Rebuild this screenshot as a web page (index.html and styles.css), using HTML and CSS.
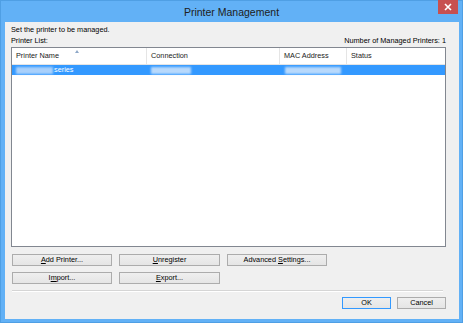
FILE: index.html
```html
<!DOCTYPE html>
<html>
<head>
<meta charset="utf-8">
<link rel="stylesheet" href="styles.css">
</head>
<body>
<div class="window">
  <div class="titlebar">
    <span class="title">Printer Management</span>
    <span class="close"><svg width="8" height="8" viewBox="0 0 8 8"><path d="M1 1L7 7M7 1L1 7" stroke="#fff" stroke-width="1.6"/></svg></span>
  </div>
  <div class="client">
    <div class="intro">Set the printer to be managed.</div>
    <div class="listhead"><span>Printer List:</span><span>Number of Managed Printers: 1</span></div>
    <div class="listview">
      <div class="lv-header">
        <div class="col c1">Printer Name<span class="sort"></span></div>
        <div class="col c2">Connection</div>
        <div class="col c3">MAC Address</div>
        <div class="col c4">Status</div>
      </div>
      <div class="lv-row selected">
        <div class="cell c1"><span class="blob b1"></span><span>series</span></div>
        <div class="cell c2"><span class="blob b2"></span></div>
        <div class="cell c3"><span class="blob b3"></span></div>
        <div class="cell c4"></div>
      </div>
    </div>
    <div class="actions">
      <button class="btn"><u>A</u>dd Printer...</button>
      <button class="btn"><u>U</u>nregister</button>
      <button class="btn">Advanced <u>S</u>ettings...</button>
      <button class="btn">I<u>m</u>port...</button>
      <button class="btn"><u>E</u>xport...</button>
    </div>
    <div class="sep"></div>
    <div class="footer">
      <button class="btn default">OK</button>
      <button class="btn">Cancel</button>
    </div>
  </div>
</div>
</body>
</html>
```
FILE: styles.css
```css
html, body {
  margin: 0;
  padding: 0;
  background: #62b1f6;
}
.window {
  width: 463px;
  height: 323px;
  box-sizing: border-box;
  background: #62b1f6;
  border: 1px solid #4f9fe4;
  display: flex;
  flex-direction: column;
  font-family: "Liberation Sans", Arial, sans-serif;
  font-size: 7.3px;
  color: #000;
}
.titlebar {
  height: 21px;
  position: relative;
  display: flex;
  align-items: center;
  justify-content: center;
}
.title {
  font-size: 10.5px;
  color: #202020;
  margin-top: 0;
}
.close {
  position: absolute;
  right: 4px;
  top: -1px;
  width: 20px;
  height: 14px;
  background: #c75050;
  display: flex;
  align-items: center;
  justify-content: center;
}
.client {
  margin: 0 3px 3px 4px;
  height: 297px;
  box-sizing: border-box;
  background: #f0f0f0;
  padding: 3px 13px 0 6px;
  display: flex;
  flex-direction: column;
}
.intro {
  height: 10px;
  line-height: 10px;
}
.listhead {
  margin-top: 1px;
  height: 10px;
  line-height: 10px;
  display: flex;
  justify-content: space-between;
}
.listview {
  margin-top: 1px;
  height: 200px;
  box-sizing: border-box;
  border: 1px solid #828790;
  background: #fff;
}
.lv-header {
  display: flex;
  height: 16px;
  border-bottom: 1px solid #e5e5e5;
}
.col {
  position: relative;
  box-sizing: border-box;
  line-height: 16px;
  padding-left: 4px;
  color: #1a1a1a;
  border-right: 1px solid #e5e5e5;
}
.c1 { width: 135px; }
.c2 { width: 133px; }
.c3 { width: 67px; }
.c4 { flex: 1; border-right: none; }
.sort {
  position: absolute;
  left: 63px;
  top: 2px;
  width: 0;
  height: 0;
  border-left: 2.5px solid transparent;
  border-right: 2.5px solid transparent;
  border-bottom: 3px solid #8ea8c8;
}
.lv-row {
  display: flex;
  height: 10px;
  line-height: 10px;
}
.lv-row.selected {
  background: #3399ff;
  color: #fff;
}
.cell {
  box-sizing: border-box;
  padding-left: 4px;
  display: flex;
  align-items: center;
}
.blob {
  display: inline-block;
  height: 7px;
  background: #a9d0fb;
  filter: blur(1px);
}
.b1 { width: 37px; margin-right: 1px; }
.b2 { width: 40px; background: #b8d9fc; }
.b3 { width: 56px; background: #b8d9fc; margin-left: 1px; }
.actions {
  margin-top: 7px;
  display: grid;
  grid-template-columns: 100px 101px 100px;
  grid-auto-rows: 12px;
  column-gap: 7px;
  row-gap: 6px;
  padding-left: 1px;
}
.btn {
  font-family: "Liberation Sans", Arial, sans-serif;
  font-size: 7.3px;
  color: #000;
  height: 12px;
  padding: 0;
  margin: 0;
  box-sizing: border-box;
  border: 1px solid #acacac;
  background: linear-gradient(#f2f2f2, #ebebeb 50%, #dddddd 51%, #cfcfcf);
  background: linear-gradient(#efefef, #e5e5e5);
  line-height: 10px;
}
.btn u { text-decoration: underline; }
.sep {
  margin: 6px 3px 0 1px;
  height: 1px;
  border-top: 1px solid #d5d5d5;
  border-bottom: 1px solid #ffffff;
  height: 0;
}
.footer {
  margin-top: 5px;
  display: flex;
  justify-content: flex-end;
  gap: 6px;
}
.footer .btn {
  width: 49px;
}
.btn.default {
  border-color: #3399ff;
}
```
